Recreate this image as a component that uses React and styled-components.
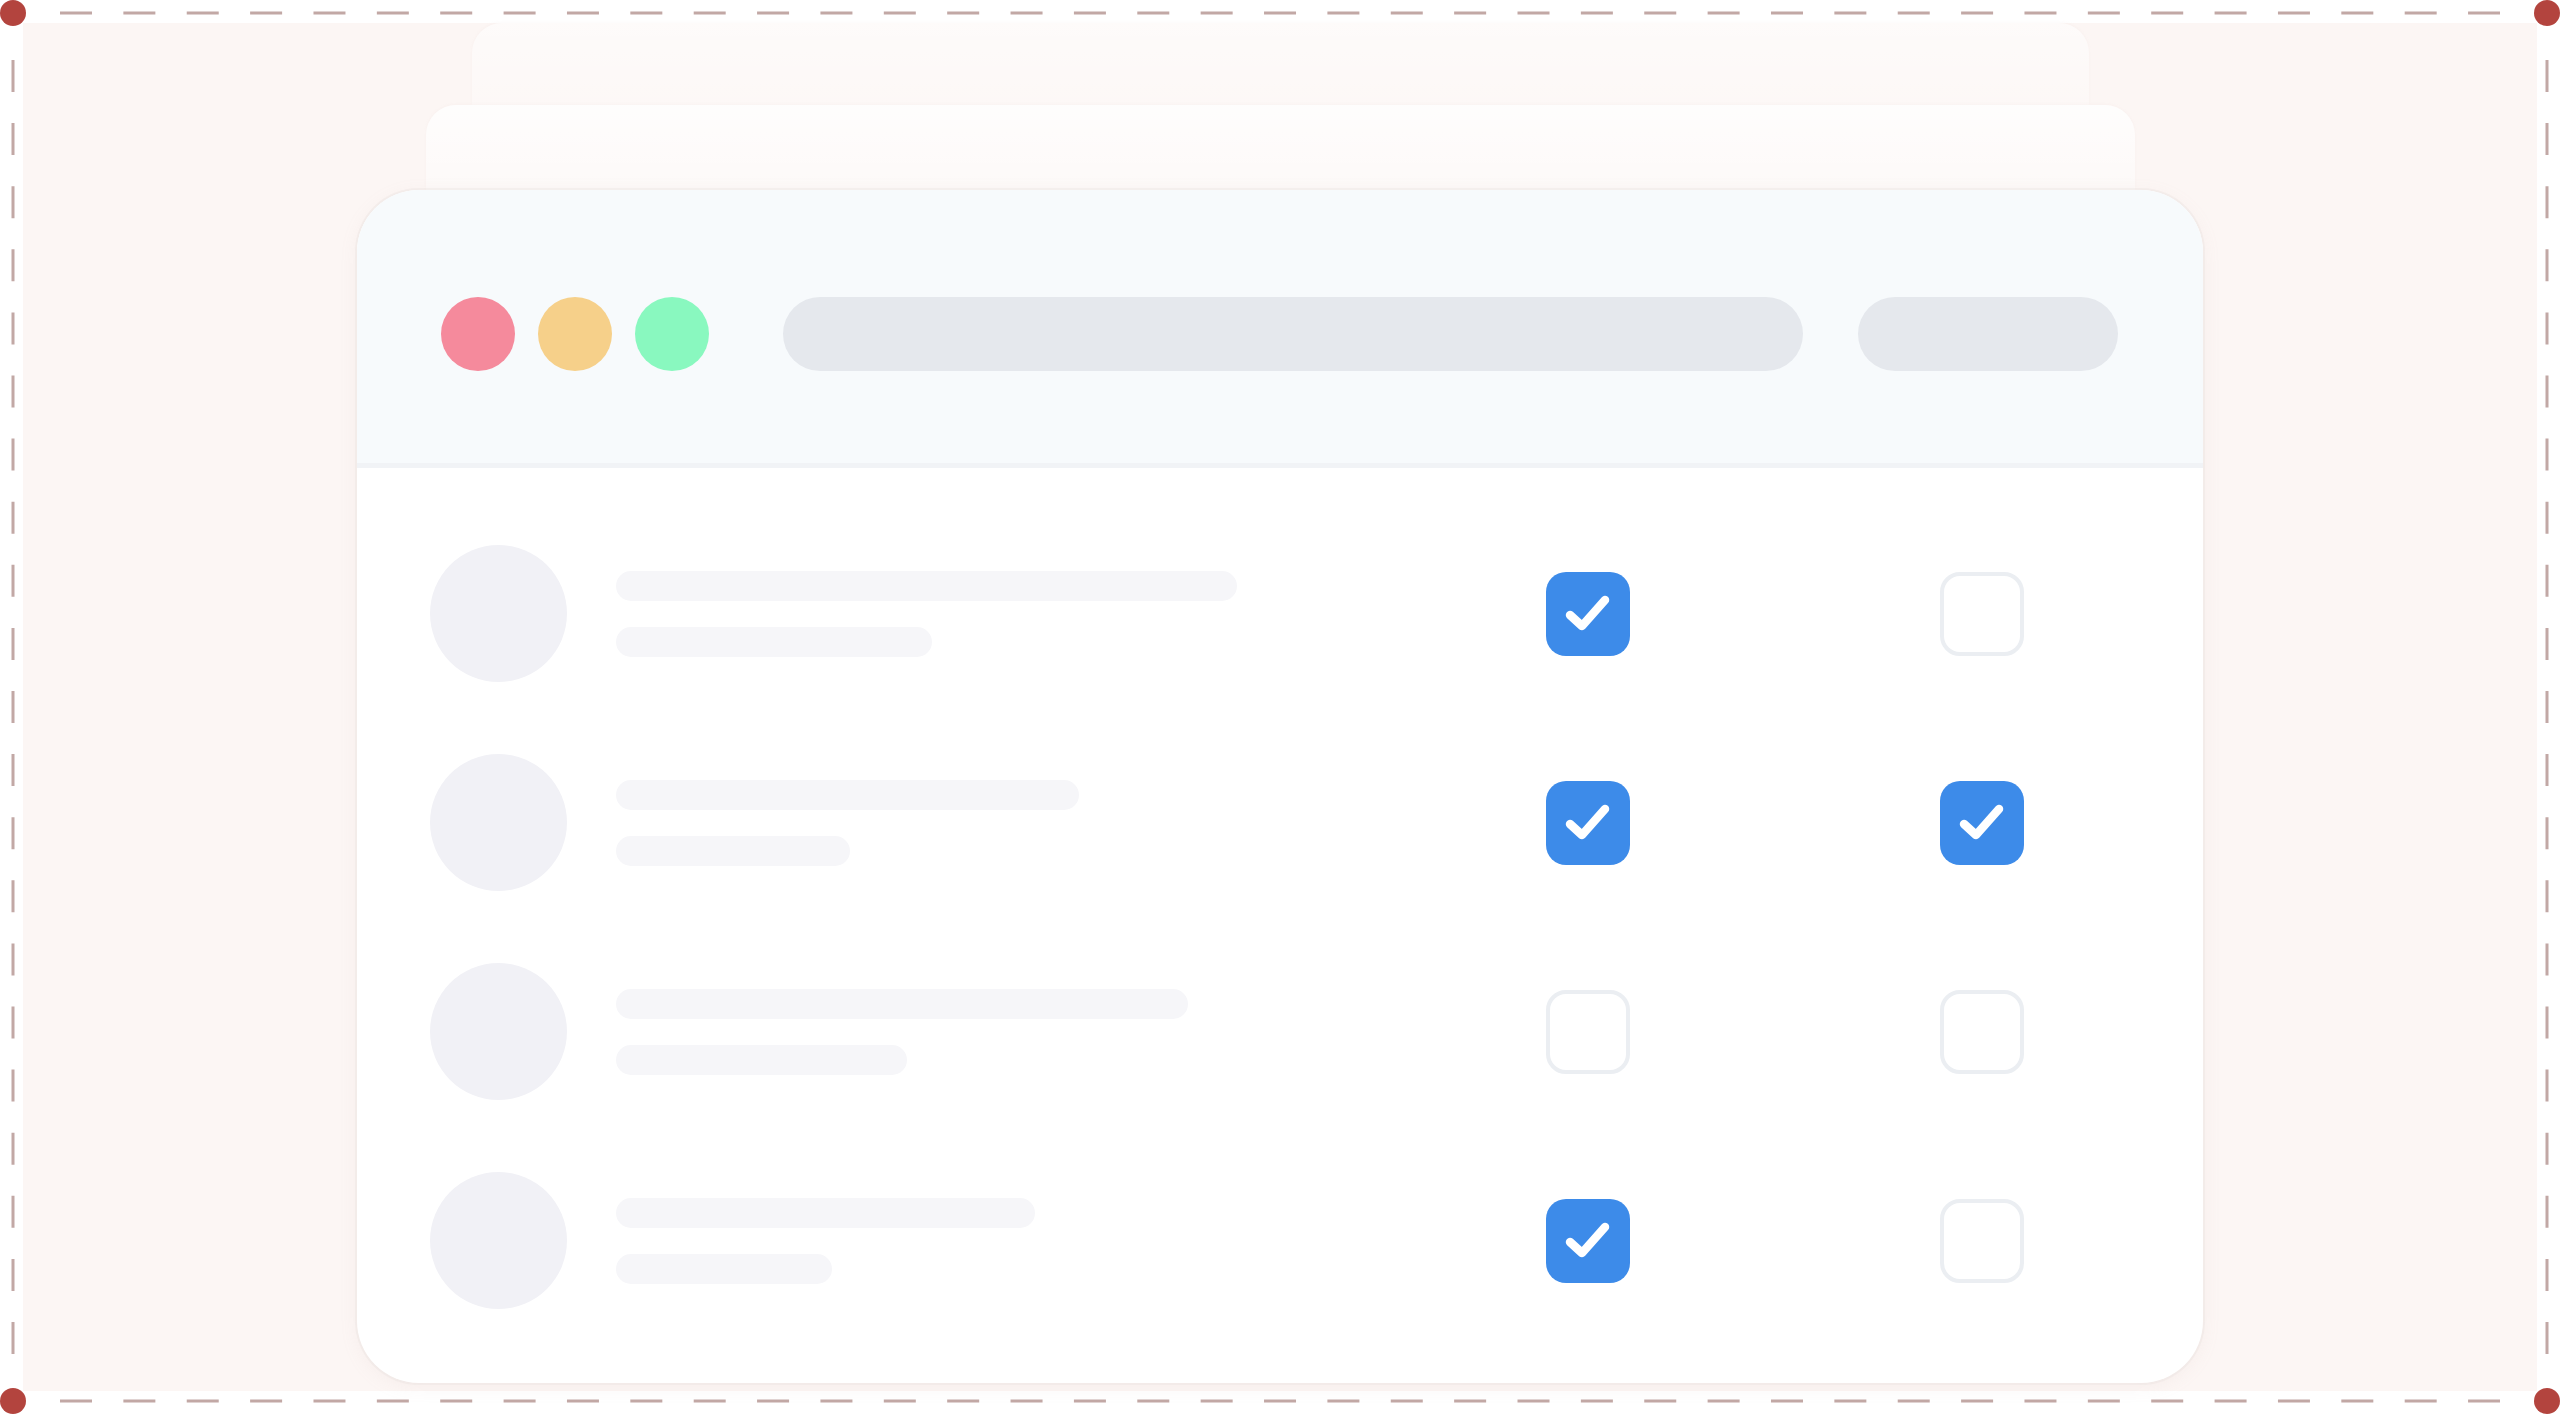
import React from "react";
import styled, { createGlobalStyle } from "styled-components";

const Global = createGlobalStyle`
  html, body { margin: 0; padding: 0; background: #ffffff; }
  body { font-family: "Liberation Sans", Arial, sans-serif; }
  #root { width: 2560px; height: 1415px; }
`;

const Stage = styled.div`
  position: relative;
  width: 2560px;
  height: 1415px;
  box-sizing: border-box;
  padding: 23px 23px 24px 23px;
  background: #ffffff;
  overflow: hidden;
`;

const Fill = styled.div`
  height: 100%;
  background: #fcf6f4;
  display: flex;
  flex-direction: column;
  align-items: center;
`;

const GhostCard = styled.div`
  width: ${(p) => p.$w}px;
  height: ${(p) => p.$h}px;
  flex-shrink: 0;
  border-radius: 30px 30px 0 0;
  background: linear-gradient(
    to bottom,
    rgba(255, 255, 255, ${(p) => p.$a}) 0%,
    rgba(255, 255, 255, ${(p) => p.$a * 0.45}) 100%
  );
  box-shadow: 0 -1px 3px rgba(200, 170, 165, 0.06);
`;

const Window = styled.div`
  width: 1846px;
  height: 1193px;
  flex-shrink: 0;
  background: #ffffff;
  border-radius: 62px;
  overflow: hidden;
  display: flex;
  flex-direction: column;
  box-shadow: 0 0 0 2px rgba(230, 222, 220, 0.3), 0 4px 18px rgba(200, 170, 165, 0.1);
`;

const Header = styled.div`
  height: 278px;
  flex-shrink: 0;
  box-sizing: border-box;
  padding: 14px 85px 0 84px;
  background: #f7fafc;
  border-bottom: 5px solid #f1f3f6;
  display: flex;
  align-items: center;
`;

const Lights = styled.div`
  display: flex;
  gap: 23px;
`;

const Light = styled.span`
  width: 74px;
  height: 74px;
  border-radius: 50%;
  background: ${(p) => p.$c};
`;

const AddressBar = styled.div`
  flex: 1;
  height: 74px;
  margin-left: 74px;
  border-radius: 37px;
  background: #e5e8ed;
`;

const ActionPill = styled.div`
  width: 260px;
  height: 74px;
  margin-left: 55px;
  border-radius: 37px;
  background: #e5e8ed;
`;

const Body = styled.div`
  flex: 1;
  box-sizing: border-box;
  padding: 77px 24px 68px 73px;
  display: flex;
  flex-direction: column;
  gap: 72px;
`;

const Row = styled.div`
  height: 137px;
  display: grid;
  grid-template-columns: 138px minmax(0, 1fr) 394px 394px;
  align-items: center;
`;

const Avatar = styled.div`
  width: 137px;
  height: 137px;
  border-radius: 50%;
  background: #f1f1f6;
`;

const Lines = styled.div`
  padding-left: 48px;
  display: flex;
  flex-direction: column;
  gap: 26px;
`;

const Line = styled.div`
  width: ${(p) => p.$w}px;
  height: 30px;
  border-radius: 15px;
  background: #f6f6f9;
`;

const Cell = styled.div`
  display: flex;
  justify-content: center;
  align-items: center;
`;

const Box = styled.div`
  width: 84px;
  height: 84px;
  box-sizing: border-box;
  border-radius: 20px;
  display: flex;
  align-items: center;
  justify-content: center;
  background: ${(p) => (p.$on ? "#3d8be9" : "#ffffff")};
  border: ${(p) => (p.$on ? "none" : "4px solid #ebeef2")};
`;

const Overlay = styled.svg`
  position: absolute;
  inset: 0;
  pointer-events: none;
`;

const Check = () => (
  <svg width="84" height="84" viewBox="0 0 84 84" fill="none">
    <path
      d="M24 43 L36 54 L59 28"
      stroke="#ffffff"
      strokeWidth="8.5"
      strokeLinecap="round"
      strokeLinejoin="round"
    />
  </svg>
);

const rows = [
  { a: 621, b: 316, c1: true, c2: false },
  { a: 463, b: 234, c1: true, c2: true },
  { a: 572, b: 291, c1: false, c2: false },
  { a: 419, b: 216, c1: true, c2: false },
];

const CheckBox = ({ on }) => <Box $on={on}>{on ? <Check /> : null}</Box>;

const Frame = () => {
  const dash = "#c2a8a5";
  const dot = "#b3443e";
  return (
    <Overlay width="2560" height="1415" viewBox="0 0 2560 1415">
      <line x1="60" y1="13" x2="2500" y2="13" stroke={dash} strokeWidth="3" strokeDasharray="32 31.37" />
      <line x1="60" y1="1401" x2="2500" y2="1401" stroke={dash} strokeWidth="3" strokeDasharray="32 31.37" />
      <line x1="13" y1="60" x2="13" y2="1354" stroke={dash} strokeWidth="3" strokeDasharray="32 31.1" />
      <line x1="2547" y1="60" x2="2547" y2="1354" stroke={dash} strokeWidth="3" strokeDasharray="32 31.1" />
      <circle cx="13" cy="13" r="13" fill={dot} />
      <circle cx="2547" cy="13" r="13" fill={dot} />
      <circle cx="13" cy="1401" r="13" fill={dot} />
      <circle cx="2547" cy="1401" r="13" fill={dot} />
    </Overlay>
  );
};

export default function App() {
  return (
    <>
      <Global />
      <Stage>
        <Fill>
          <GhostCard $w={1617} $h={82} $a={0.55} />
          <GhostCard $w={1709} $h={85} $a={0.8} />
          <Window>
            <Header>
              <Lights>
                <Light $c="#f58a9c" />
                <Light $c="#f6d08a" />
                <Light $c="#89f8bf" />
              </Lights>
              <AddressBar />
              <ActionPill />
            </Header>
            <Body>
              {rows.map((r, i) => (
                <Row key={i}>
                  <Avatar />
                  <Lines>
                    <Line $w={r.a} />
                    <Line $w={r.b} />
                  </Lines>
                  <Cell>
                    <CheckBox on={r.c1} />
                  </Cell>
                  <Cell>
                    <CheckBox on={r.c2} />
                  </Cell>
                </Row>
              ))}
            </Body>
          </Window>
        </Fill>
        <Frame />
      </Stage>
    </>
  );
}
